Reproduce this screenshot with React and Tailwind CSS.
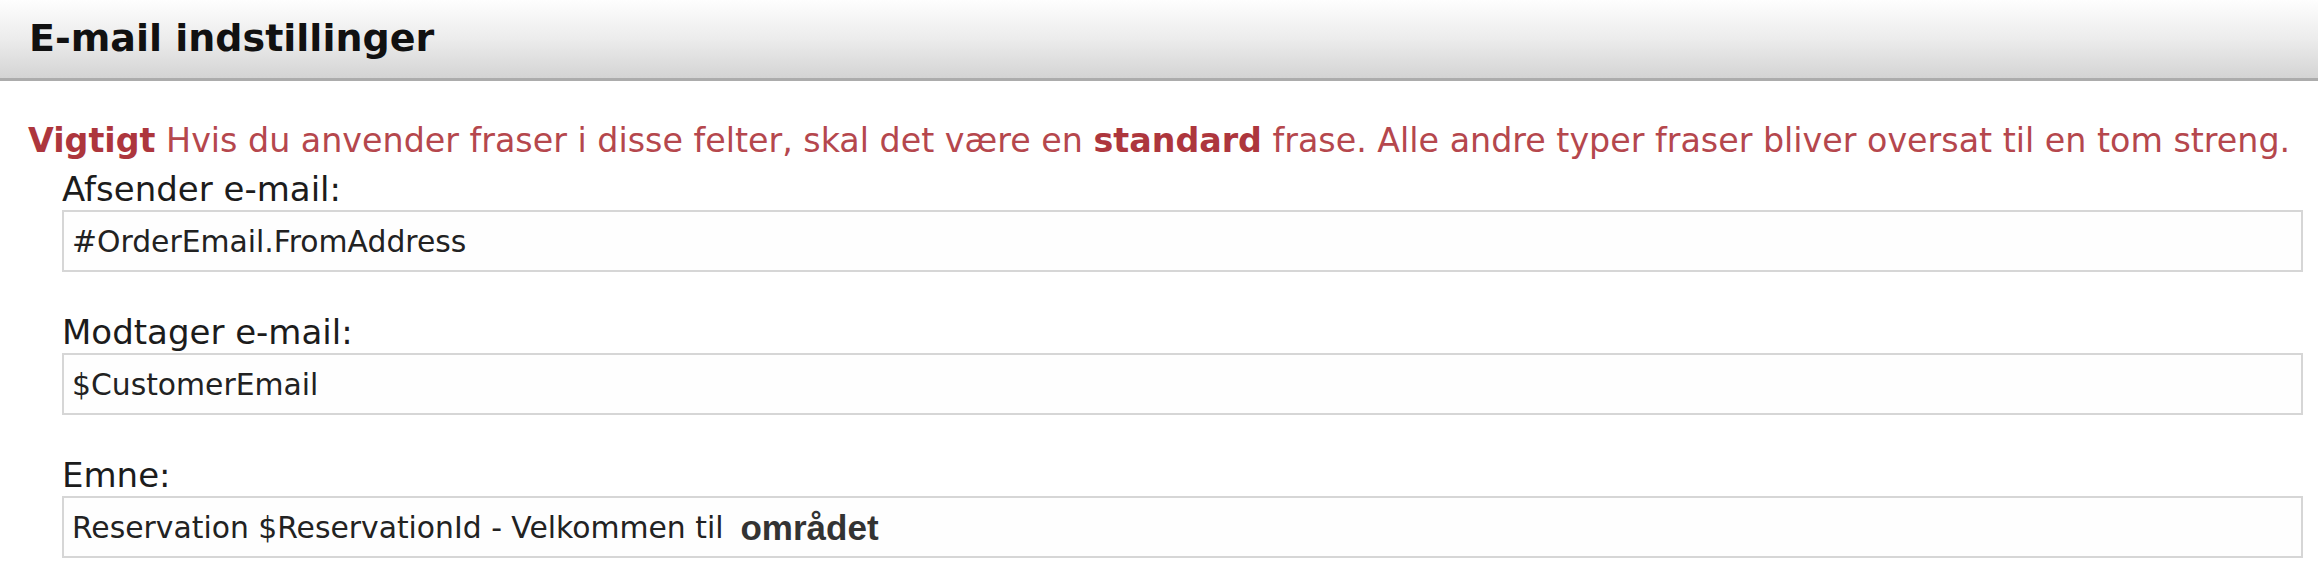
import React from "react";

const fields = [
  { label: "Afsender e-mail:", value: "#OrderEmail.FromAddress" },
  { label: "Modtager e-mail:", value: "$CustomerEmail" },
  { label: "Emne:", value: "Reservation $ReservationId - Velkommen til", bold: "området" },
];

const App = () => {
  return (
    <div className="w-[2318px] h-[588px] bg-white font-['DejaVu_Sans',Verdana,sans-serif]">
      <header className="flex items-center h-[81px] pl-[29px] pb-[2px] border-b-[3px] border-[#acacac] bg-gradient-to-b from-[#fefefe] via-[#ececec] to-[#d4d4d4]">
        <h1 className="text-[38px] leading-none font-bold text-[#111]">
          E-mail indstillinger
        </h1>
      </header>

      <div className="pt-[40px] pl-[28px] pr-[15px]">
        <p className="text-[33.3px] leading-[40px] text-[#b5474d] whitespace-nowrap">
          <b className="font-bold text-[#ad363d]">Vigtigt</b> Hvis du anvender fraser i disse felter, skal det være en{" "}
          <b className="font-bold text-[#ad363d]">standard</b> frase. Alle andre typer fraser bliver oversat til en tom streng.
        </p>

        <div className="flex flex-col gap-[41px] pl-[34px] pt-[9px]">
          {fields.map((f) => (
            <div key={f.label} className="flex flex-col gap-[2px]">
              <label className="text-[34px] leading-[38px] text-[#1c1c1c]">{f.label}</label>
              <div className="h-[62px] flex items-center pl-[8px] pt-[3px] bg-[#fefefe] border-2 border-[#d6d6d6] text-[29.8px] text-[#222] whitespace-nowrap">
                <span>{f.value}</span>
                {f.bold && (
                  <span className="ml-[17px] font-bold text-[35px] text-[#333] font-['Liberation_Sans',Arial,sans-serif]">
                    {f.bold}
                  </span>
                )}
              </div>
            </div>
          ))}
        </div>
      </div>
    </div>
  );
};
export default App;
